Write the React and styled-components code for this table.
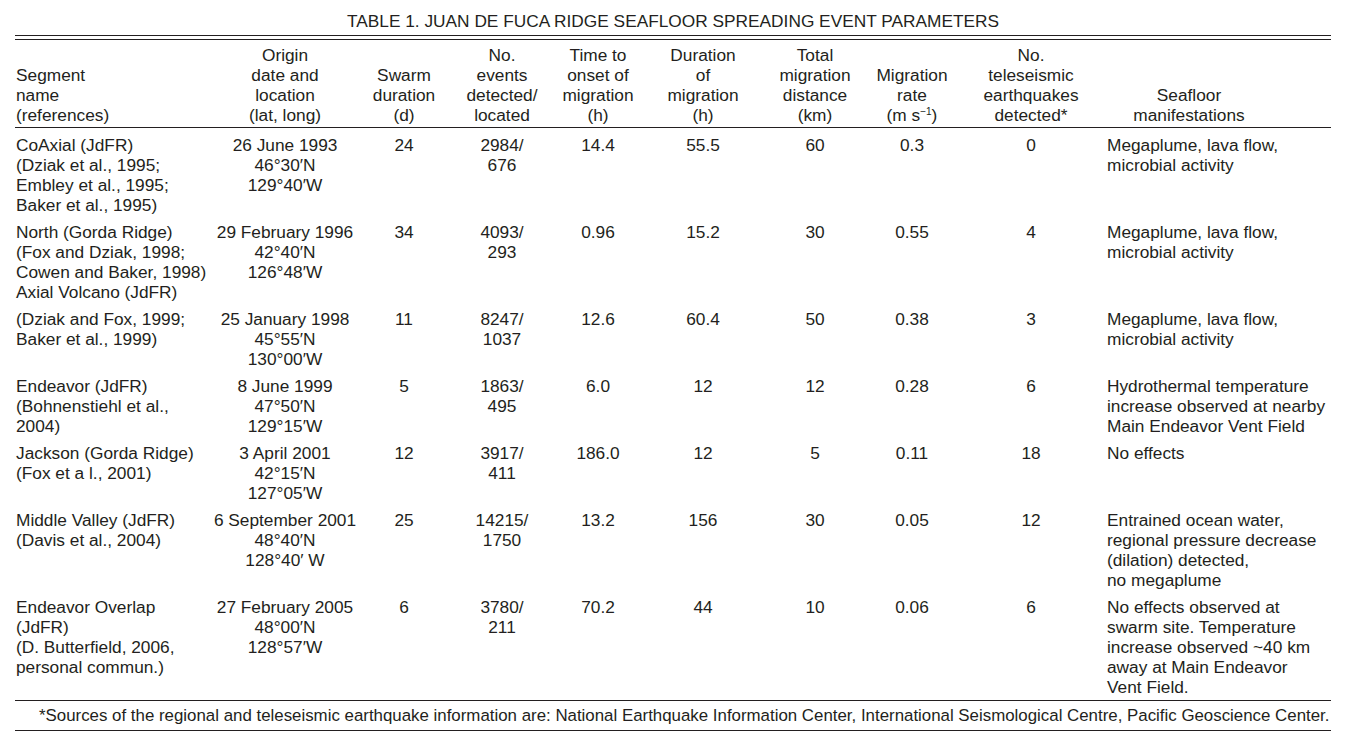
import React from "react";
import styled, { createGlobalStyle } from "styled-components";

const GlobalStyle = createGlobalStyle`
  html, body { margin: 0; padding: 0; background: #ffffff; }
  body {
    font-family: "Liberation Sans", Arial, Helvetica, sans-serif;
    color: #231f20;
  }
`;

const INK = "#231f20";

const Page = styled.div`
  width: 1316px;
  padding: 0 0 16px 15px;
  font-size: 17.3px;
  line-height: 20px;
`;

const Title = styled.h1`
  margin: 0;
  padding-top: 11px;
  font-size: 17.3px;
  font-weight: 400;
  line-height: 20px;
  text-align: center;
`;

const DoubleRule = styled.div`
  margin-top: 4px;
  height: 3px;
  border-top: 1px solid ${INK};
  border-bottom: 1px solid ${INK};
`;

const Table = styled.table`
  width: 1316px;
  border-collapse: collapse;
  table-layout: fixed;
`;

const HeadCell = styled.th`
  padding: 5px ${(p) => (p.$padRight ? p.$padRight : 0)}px 2px ${(p) => p.$padLeft || 0}px;
  font-weight: 400;
  vertical-align: bottom;
  text-align: ${(p) => (p.$left ? "left" : "center")};
  white-space: nowrap;
  border-bottom: 1px solid ${INK};
`;

const BodyRow = styled.tr`
  &:last-child td {
    padding-bottom: 3px;
  }
`;

const BodyCell = styled.td`
  padding: 7px 0 0 ${(p) => p.$padLeft || 0}px;
  vertical-align: top;
  text-align: ${(p) => (p.$left ? "left" : "center")};
  white-space: nowrap;
`;

const FootCell = styled.td`
  padding: 5px 0 4px 24px;
  font-size: 16.87px;
  border-top: 1px solid ${INK};
  border-bottom: 1px solid ${INK};
  white-space: nowrap;
`;

const Line = styled.div`
  height: 20px;
`;

const Sup = styled.sup`
  font-size: 10px;
  line-height: 0;
  vertical-align: 6px;
`;

const widths = [195, 150, 88, 108, 84, 126, 98, 96, 142, 229];

const Lines = ({ lines }) =>
  lines.map((l, i) => <Line key={i}>{l}</Line>);

const headers = [
  { lines: ["Segment", "name", "(references)"], left: true, padLeft: 1 },
  { lines: ["Origin", "date and", "location", "(lat, long)"] },
  { lines: ["Swarm", "duration", "(d)"] },
  { lines: ["No.", "events", "detected/", "located"] },
  { lines: ["Time to", "onset of", "migration", "(h)"] },
  { lines: ["Duration", "of", "migration", "(h)"] },
  { lines: ["Total", "migration", "distance", "(km)"] },
  {
    lines: [
      "Migration",
      "rate",
      <>
        (m s<Sup>−1</Sup>)
      </>,
    ],
  },
  { lines: ["No.", "teleseismic", "earthquakes", "detected*"] },
  { lines: ["Seafloor", "manifestations"], padRight: 55 },
];

const rows = [
  [
    ["CoAxial (JdFR)", "(Dziak et al., 1995;", "Embley et al., 1995;", "Baker et al., 1995)"],
    ["26 June 1993", "46°30′N", "129°40′W"],
    ["24"],
    ["2984/", "676"],
    ["14.4"],
    ["55.5"],
    ["60"],
    ["0.3"],
    ["0"],
    ["Megaplume, lava flow,", "microbial activity"],
  ],
  [
    ["North (Gorda Ridge)", "(Fox and Dziak, 1998;", "Cowen and Baker, 1998)", "Axial Volcano (JdFR)"],
    ["29 February 1996", "42°40′N", "126°48′W"],
    ["34"],
    ["4093/", "293"],
    ["0.96"],
    ["15.2"],
    ["30"],
    ["0.55"],
    ["4"],
    ["Megaplume, lava flow,", "microbial activity"],
  ],
  [
    ["(Dziak and Fox, 1999;", "Baker et al., 1999)"],
    ["25 January 1998", "45°55′N", "130°00′W"],
    ["11"],
    ["8247/", "1037"],
    ["12.6"],
    ["60.4"],
    ["50"],
    ["0.38"],
    ["3"],
    ["Megaplume, lava flow,", "microbial activity"],
  ],
  [
    ["Endeavor (JdFR)", "(Bohnenstiehl et al.,", "2004)"],
    ["8 June 1999", "47°50′N", "129°15′W"],
    ["5"],
    ["1863/", "495"],
    ["6.0"],
    ["12"],
    ["12"],
    ["0.28"],
    ["6"],
    ["Hydrothermal temperature", "increase observed at nearby", "Main Endeavor Vent Field"],
  ],
  [
    ["Jackson (Gorda Ridge)", "(Fox et a l., 2001)"],
    ["3 April 2001", "42°15′N", "127°05′W"],
    ["12"],
    ["3917/", "411"],
    ["186.0"],
    ["12"],
    ["5"],
    ["0.11"],
    ["18"],
    ["No effects"],
  ],
  [
    ["Middle Valley (JdFR)", "(Davis et al., 2004)"],
    ["6 September 2001", "48°40′N", "128°40′ W"],
    ["25"],
    ["14215/", "1750"],
    ["13.2"],
    ["156"],
    ["30"],
    ["0.05"],
    ["12"],
    ["Entrained ocean water,", "regional pressure decrease", "(dilation) detected,", "no megaplume"],
  ],
  [
    ["Endeavor Overlap", "(JdFR)", "(D. Butterfield, 2006,", "personal commun.)"],
    ["27 February 2005", "48°00′N", "128°57′W"],
    ["6"],
    ["3780/", "211"],
    ["70.2"],
    ["44"],
    ["10"],
    ["0.06"],
    ["6"],
    [
      "No effects observed at",
      "swarm site. Temperature",
      "increase observed ~40 km",
      "away at Main Endeavor",
      "Vent Field.",
    ],
  ],
];

const cellAlign = (i) => {
  if (i === 0) return { left: true, padLeft: 1 };
  if (i === 9) return { left: true, padLeft: 5 };
  return { left: false, padLeft: 0 };
};

export default function App() {
  return (
    <>
      <GlobalStyle />
      <Page>
        <Title>TABLE 1. JUAN DE FUCA RIDGE SEAFLOOR SPREADING EVENT PARAMETERS</Title>
        <DoubleRule />
        <Table>
          <colgroup>
            {widths.map((w, i) => (
              <col key={i} style={{ width: w }} />
            ))}
          </colgroup>
          <thead>
            <tr>
              {headers.map((h, i) => (
                <HeadCell key={i} $left={h.left} $padLeft={h.padLeft} $padRight={h.padRight}>
                  <Lines lines={h.lines} />
                </HeadCell>
              ))}
            </tr>
          </thead>
          <tbody>
            {rows.map((r, ri) => (
              <BodyRow key={ri}>
                {r.map((c, ci) => {
                  const a = cellAlign(ci);
                  return (
                    <BodyCell key={ci} $left={a.left} $padLeft={a.padLeft}>
                      <Lines lines={c} />
                    </BodyCell>
                  );
                })}
              </BodyRow>
            ))}
          </tbody>
          <tfoot>
            <tr>
              <FootCell colSpan={10}>
                *Sources of the regional and teleseismic earthquake information are: National Earthquake
                Information Center, International Seismological Centre, Pacific Geoscience Center.
              </FootCell>
            </tr>
          </tfoot>
        </Table>
      </Page>
    </>
  );
}
